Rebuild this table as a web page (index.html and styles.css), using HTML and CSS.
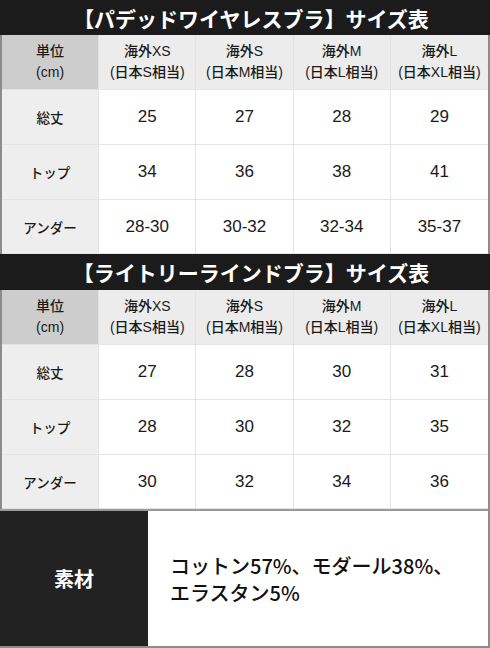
FILE: index.html
```html
<!DOCTYPE html>
<html lang="ja">
<head>
    <meta charset="UTF-8">
    <meta name="viewport" content="width=device-width, initial-scale=1.0">
    <title>サイズ表</title>
    <link rel="stylesheet" href="styles.css">
</head>
<body>
    <div class="sheet">
        <h2 class="sheet-title">【パデッドワイヤレスブラ】サイズ表</h2>
        <div class="size-table">
            <div class="cell unit">単位<br>(cm)</div>
            <div class="cell head">海外XS<br>(日本S相当)</div>
            <div class="cell head">海外S<br>(日本M相当)</div>
            <div class="cell head">海外M<br>(日本L相当)</div>
            <div class="cell head">海外L<br>(日本XL相当)</div>

            <div class="cell label">総丈</div>
            <div class="cell num">25</div>
            <div class="cell num">27</div>
            <div class="cell num">28</div>
            <div class="cell num">29</div>

            <div class="cell label">トップ</div>
            <div class="cell num">34</div>
            <div class="cell num">36</div>
            <div class="cell num">38</div>
            <div class="cell num">41</div>

            <div class="cell label">アンダー</div>
            <div class="cell num">28-30</div>
            <div class="cell num">30-32</div>
            <div class="cell num">32-34</div>
            <div class="cell num">35-37</div>
        </div>

        <h2 class="sheet-title second">【ライトリーラインドブラ】サイズ表</h2>
        <div class="size-table">
            <div class="cell unit">単位<br>(cm)</div>
            <div class="cell head">海外XS<br>(日本S相当)</div>
            <div class="cell head">海外S<br>(日本M相当)</div>
            <div class="cell head">海外M<br>(日本L相当)</div>
            <div class="cell head">海外L<br>(日本XL相当)</div>

            <div class="cell label">総丈</div>
            <div class="cell num">27</div>
            <div class="cell num">28</div>
            <div class="cell num">30</div>
            <div class="cell num">31</div>

            <div class="cell label">トップ</div>
            <div class="cell num">28</div>
            <div class="cell num">30</div>
            <div class="cell num">32</div>
            <div class="cell num">35</div>

            <div class="cell label">アンダー</div>
            <div class="cell num">30</div>
            <div class="cell num">32</div>
            <div class="cell num">34</div>
            <div class="cell num">36</div>
        </div>

        <div class="material">
            <div class="material-label">素材</div>
            <div class="material-text">コットン57%、モダール38%、<br>エラスタン5%</div>
        </div>
    </div>
</body>
</html>
```

FILE: styles.css
```css
body {
    margin: 0;
    padding: 0;
    background-color: #ffffff;
    font-family: "Liberation Sans", "Noto Sans CJK JP", sans-serif;
    color: #1a1a1a;
}
.sheet {
    width: 490px;
    height: 648px;
    display: flex;
    flex-direction: column;
}
.sheet-title {
    margin: 0;
    height: 35px;
    background-color: #1b1b1b;
    color: #ffffff;
    font-family: "Noto Sans CJK JP", sans-serif;
    font-size: 21px;
    font-weight: 700;
    display: flex;
    align-items: center;
    justify-content: center;
    padding-left: 12px;
}
.sheet-title.second {
    height: 36px;
}
.size-table {
    display: grid;
    grid-template-columns: repeat(5, 1fr);
    grid-template-rows: 55px 55px 55px 54px;
    border-left: 2px solid #8c8c8c;
    border-right: 2px solid #8c8c8c;
}
.cell {
    display: flex;
    align-items: center;
    justify-content: center;
    text-align: center;
    border-right: 1px solid #e4e4e4;
    border-bottom: 1px solid #e4e4e4;
    font-weight: 500;
}
.cell:nth-child(5n) {
    border-right: none;
}
.unit {
    background-color: #cdcdcd;
    font-size: 14px;
    line-height: 21px;
}
.head {
    background-color: #ececec;
    font-size: 14px;
    line-height: 21px;
}
.label {
    background-color: #eeeeee;
    font-size: 13.5px;
}
.num {
    font-size: 17px;
}
.material {
    flex: 1;
    display: grid;
    grid-template-columns: 148px 1fr;
    border-top: 2px solid #9a9a9a;
    border-right: 2px solid #8c8c8c;
    border-bottom: 2px solid #8c8c8c;
}
.material-label {
    background-color: #222222;
    color: #ffffff;
    font-family: "Noto Sans CJK JP", sans-serif;
    font-size: 20px;
    font-weight: 700;
    display: flex;
    align-items: center;
    justify-content: center;
}
.material-text {
    display: flex;
    align-items: center;
    padding-left: 22px;
    font-family: "Noto Sans CJK JP", sans-serif;
    font-size: 20px;
    font-weight: 500;
    line-height: 27px;
    color: #111111;
}
```
